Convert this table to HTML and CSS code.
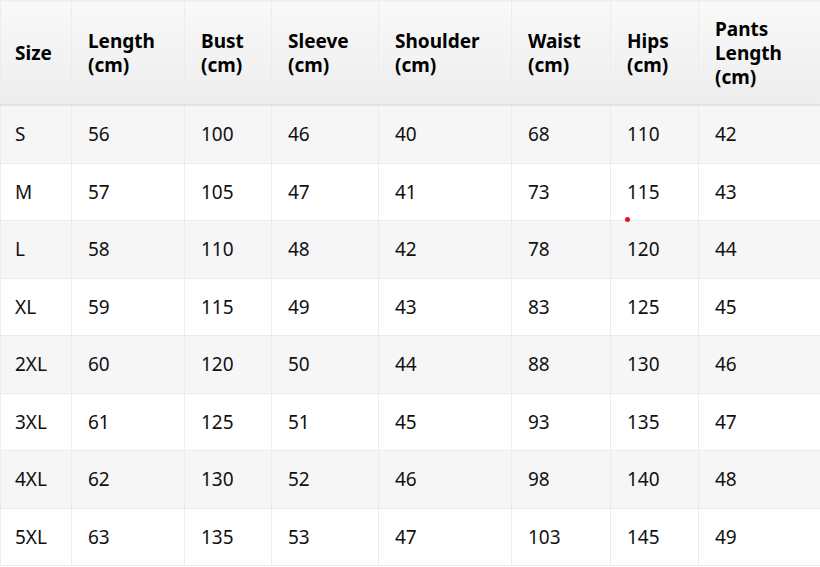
FILE: index.html
```html
<!DOCTYPE html>
<html>
<head>
<meta charset="utf-8">
<link rel="stylesheet" href="styles.css">
</head>
<body>
<div class="wrap">
<table class="size-table">
  <colgroup>
    <col class="c1"><col class="c2"><col class="c3"><col class="c4"><col class="c5"><col class="c6"><col class="c7"><col class="c8">
  </colgroup>
  <thead>
    <tr>
      <th>Size</th>
      <th>Length<br>(cm)</th>
      <th>Bust<br>(cm)</th>
      <th>Sleeve<br>(cm)</th>
      <th>Shoulder<br>(cm)</th>
      <th>Waist<br>(cm)</th>
      <th>Hips<br>(cm)</th>
      <th>Pants<br>Length<br>(cm)</th>
    </tr>
  </thead>
  <tbody>
    <tr><td>S</td><td>56</td><td>100</td><td>46</td><td>40</td><td>68</td><td>110</td><td>42</td></tr>
    <tr><td>M</td><td>57</td><td>105</td><td>47</td><td>41</td><td>73</td><td>115</td><td>43</td></tr>
    <tr><td>L</td><td>58</td><td>110</td><td>48</td><td>42</td><td>78</td><td>120</td><td>44</td></tr>
    <tr><td>XL</td><td>59</td><td>115</td><td>49</td><td>43</td><td>83</td><td>125</td><td>45</td></tr>
    <tr><td>2XL</td><td>60</td><td>120</td><td>50</td><td>44</td><td>88</td><td>130</td><td>46</td></tr>
    <tr><td>3XL</td><td>61</td><td>125</td><td>51</td><td>45</td><td>93</td><td>135</td><td>47</td></tr>
    <tr><td>4XL</td><td>62</td><td>130</td><td>52</td><td>46</td><td>98</td><td>140</td><td>48</td></tr>
    <tr><td>5XL</td><td>63</td><td>135</td><td>53</td><td>47</td><td>103</td><td>145</td><td>49</td></tr>
  </tbody>
</table>
<span class="dot"></span>
</div>
</body>
</html>
```
FILE: styles.css
```css
html, body {
  margin: 0;
  padding: 0;
  background: #ffffff;
}
.wrap {
  position: relative;
  width: 820px;
  overflow: hidden;
}
.size-table {
  border-collapse: collapse;
  table-layout: fixed;
  width: 822px;
  font-family: "Noto Sans", "Open Sans", sans-serif;
  font-size: 19px;
  color: #111;
}
.c1 { width: 71px; }
.c2 { width: 113px; }
.c3 { width: 87px; }
.c4 { width: 107px; }
.c5 { width: 133px; }
.c6 { width: 99px; }
.c7 { width: 88px; }
.c8 { width: 124px; }
.size-table th,
.size-table td {
  border: 1px solid #ececec;
  padding: 0 15px;
  text-align: left;
  vertical-align: middle;
}
.size-table th {
  font-weight: 700;
  font-size: 19px;
  line-height: 24px;
  color: #000;
  height: 103px;
  background: linear-gradient(#f9f9f9, #ededed);
  border-bottom: 2px solid #e3e3e3;
  padding-left: 16px;
}
.size-table th:first-child {
  padding-left: 14px;
}
.size-table thead tr:first-child th {
  border-top: 1px solid #eeeeee;
}
.size-table td {
  height: 56.5px;
  line-height: 24px;
  padding-left: 16px;
}
.size-table td:first-child {
  padding-left: 14px;
}
.size-table tbody tr:nth-child(odd) td {
  background: #f6f6f6;
}
.size-table tbody tr:nth-child(even) td {
  background: #ffffff;
}
.dot {
  position: absolute;
  left: 625px;
  top: 217px;
  width: 5px;
  height: 5px;
  border-radius: 50%;
  background: #e8112d;
}
```
